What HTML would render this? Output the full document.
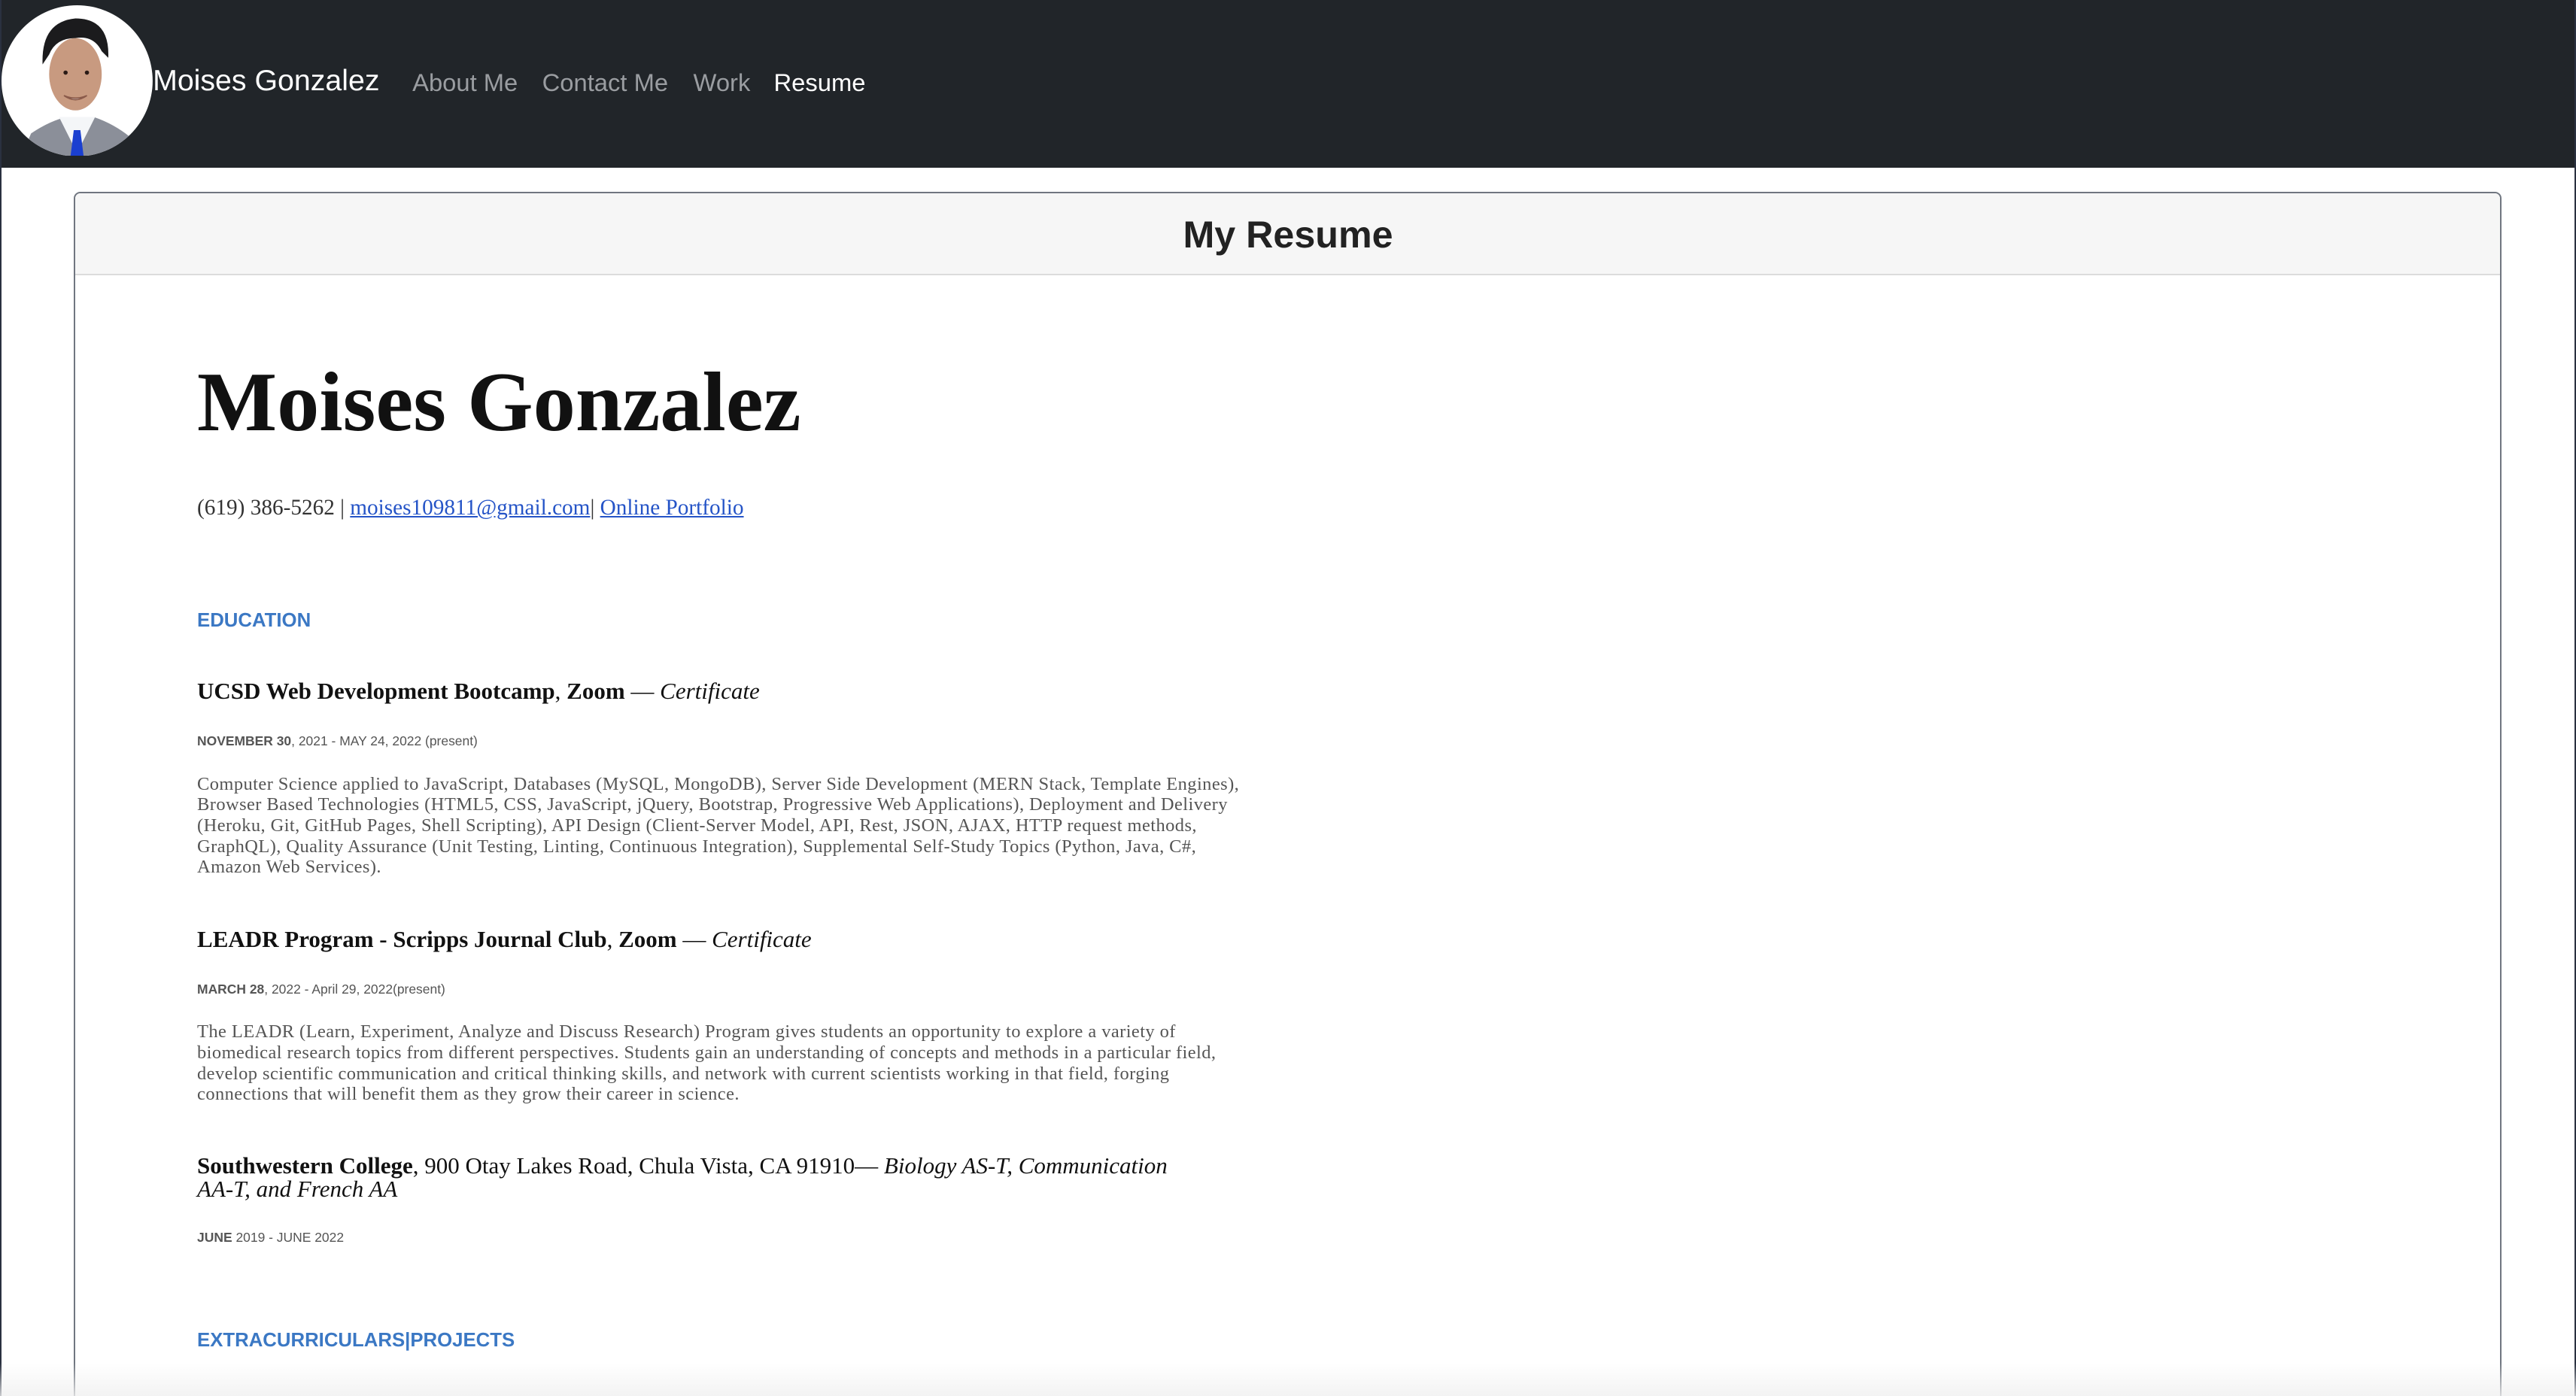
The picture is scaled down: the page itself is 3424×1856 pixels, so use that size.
<!DOCTYPE html>
<html><head><meta charset="utf-8"><style>
html,body{margin:0;padding:0;background:#fff;overflow:hidden}
#w{zoom:2.18367;width:1568px;height:850px;position:relative;overflow:hidden;background:#fff}
.a{position:absolute;white-space:nowrap}
.nav{position:absolute;left:0;top:0;width:1568px;height:102px;background:#212529}
.s{font-family:"Liberation Sans",sans-serif}
.r{font-family:"Liberation Serif",serif}
.card{position:absolute;left:45px;top:117px;width:1476px;height:760px;border:1px solid #707680;border-radius:4px;background:#fff;overflow:hidden}
.hd{position:absolute;left:0;top:0;right:0;height:49px;background:#f6f6f6;border-bottom:1px solid #dcdcdc}
.h3{font-family:"Liberation Serif",serif;font-size:14.2px;color:#111;line-height:14px}
.dt{font-family:"Liberation Sans",sans-serif;font-size:8px;color:#555;line-height:9px}
.p{font-family:"Liberation Serif",serif;font-size:11.2px;color:#555;line-height:12.7px;letter-spacing:0.2px}
.sec{font-family:"Liberation Sans",sans-serif;font-weight:bold;font-size:11.8px;color:#3b78c4;line-height:12px}
a{color:#2554c7}
</style></head><body><div id="w">
<div class="nav"></div>
<div class="a" style="left:0;top:0;width:1px;height:850px;background:#2a3140"></div>
<div class="a" style="left:1567px;top:0;width:1px;height:850px;background:#2a3140"></div>
<svg class="a" style="left:1px;top:3px" width="92" height="92" viewBox="0 0 92 92">
<defs><clipPath id="c"><circle cx="46" cy="46" r="46"/></clipPath></defs>
<circle cx="46" cy="46" r="46" fill="#fff"/>
<g clip-path="url(#c)">
<path d="M12 92 L18 78 Q30 70 40 68 L56 68 Q68 72 78 80 L82 92Z" fill="#8b8f99"/>
<path d="M35 68 L46 90 L57 68Z" fill="#f4f6f8"/>
<path d="M44 76 L48 76 L50 92 L42 92Z" fill="#1a3fd0"/>
<ellipse cx="45" cy="42" rx="16" ry="22" fill="#c89a80"/>
<path d="M25 36 Q24 10 45 8 Q66 8 65 32 L61 28 Q56 18 45 20 Q33 20 29 30Z" fill="#1b1b1d"/>
<path d="M38 55 Q45 60 52 55 Q45 58 38 55Z" fill="#fff" stroke="#8a5a4a" stroke-width="0.8"/>
<circle cx="39" cy="41" r="1.3" fill="#2a1a15"/><circle cx="52" cy="41" r="1.3" fill="#2a1a15"/>
</g></svg>
<div class="a s" style="left:93px;top:39px;font-size:18px;color:#fff;line-height:21px">Moises Gonzalez</div>
<div class="a s" style="left:251px;top:41px;font-size:15px;color:#9a9da1;line-height:18px">About Me</div>
<div class="a s" style="left:330px;top:41px;font-size:15px;color:#9a9da1;line-height:18px">Contact Me</div>
<div class="a s" style="left:422px;top:41px;font-size:15px;color:#9a9da1;line-height:18px">Work</div>
<div class="a s" style="left:471px;top:41px;font-size:15px;color:#fff;line-height:18px">Resume</div>
<div class="card"><div class="hd"></div></div>
<div class="a s" style="left:0;width:1568px;text-align:center;top:129px;font-size:23px;font-weight:bold;color:#222;line-height:28px">My Resume</div>
<div class="a r" style="left:120px;top:217px;font-size:51.5px;font-weight:bold;color:#111;line-height:56px">Moises Gonzalez</div>
<div class="a r" style="left:120px;top:302px;font-size:13.4px;color:#333;line-height:15px">(619) 386-5262 | <a href="#">moises109811@gmail.com</a>| <a href="#">Online Portfolio</a></div>
<div class="a sec" style="left:120px;top:372px">EDUCATION</div>
<div class="a h3" style="left:120px;top:414px"><b>UCSD Web Development Bootcamp</b>, <b>Zoom</b> — <i>Certificate</i></div>
<div class="a dt" style="left:120px;top:447px"><b>NOVEMBER 30</b>, 2021 - MAY 24, 2022 (present)</div>
<div class="a p" style="left:120px;top:471px">Computer Science applied to JavaScript, Databases (MySQL, MongoDB), Server Side Development (MERN Stack, Template Engines),<br>Browser Based Technologies (HTML5, CSS, JavaScript, jQuery, Bootstrap, Progressive Web Applications), Deployment and Delivery<br>(Heroku, Git, GitHub Pages, Shell Scripting), API Design (Client-Server Model, API, Rest, JSON, AJAX, HTTP request methods,<br>GraphQL), Quality Assurance (Unit Testing, Linting, Continuous Integration), Supplemental Self-Study Topics (Python, Java, C#,<br>Amazon Web Services).</div>
<div class="a h3" style="left:120px;top:565px"><b>LEADR Program - Scripps Journal Club</b>, <b>Zoom</b> — <i>Certificate</i></div>
<div class="a dt" style="left:120px;top:598px"><b>MARCH 28</b>, 2022 - April 29, 2022(present)</div>
<div class="a p" style="left:120px;top:622px">The LEADR (Learn, Experiment, Analyze and Discuss Research) Program gives students an opportunity to explore a variety of<br>biomedical research topics from different perspectives. Students gain an understanding of concepts and methods in a particular field,<br>develop scientific communication and critical thinking skills, and network with current scientists working in that field, forging<br>connections that will benefit them as they grow their career in science.</div>
<div class="a h3" style="left:120px;top:703px"><b>Southwestern College</b>, 900 Otay Lakes Road, Chula Vista, CA 91910— <i>Biology AS-T, Communication</i><br><i>AA-T, and French AA</i></div>
<div class="a dt" style="left:120px;top:749px"><b>JUNE</b> 2019 - JUNE 2022</div>
<div class="a sec" style="left:120px;top:810px">EXTRACURRICULARS|PROJECTS</div>
<div class="a" style="left:0;top:830px;width:1568px;height:20px;background:linear-gradient(rgba(240,240,240,0),rgba(240,240,240,0.8))"></div>
</div></body></html>
